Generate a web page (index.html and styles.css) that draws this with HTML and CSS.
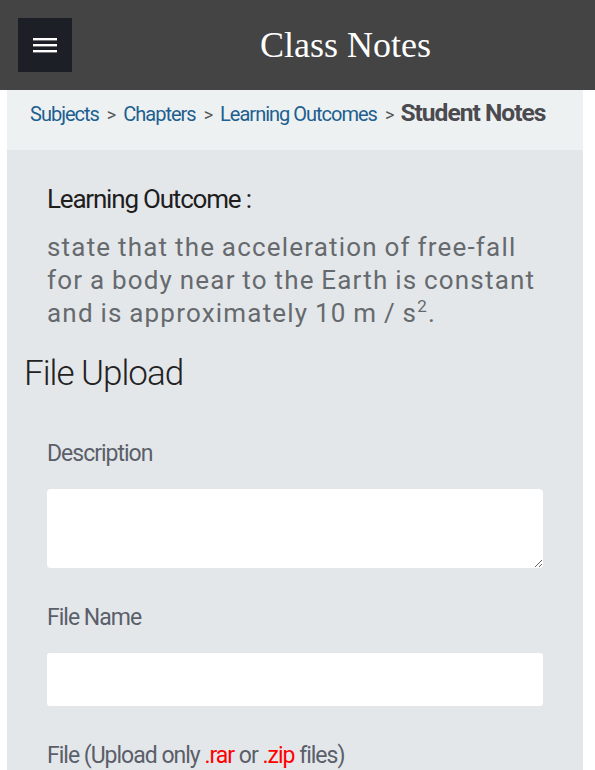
FILE: index.html
```html
<!DOCTYPE html>
<html>
<head>
<meta charset="utf-8">
<link rel="stylesheet" href="styles.css">
</head>
<body>
<header class="topbar">
  <button class="menu-btn" aria-label="Menu">
    <svg width="24" height="16" viewBox="0 0 24 16"><rect x="0" y="1" width="24" height="2.4" fill="#fff"/><rect x="0" y="7" width="24" height="2.4" fill="#fff"/><rect x="0" y="13" width="24" height="2.4" fill="#fff"/></svg>
  </button>
  <h1 class="title">Class Notes</h1>
</header>
<main class="panel">
  <nav class="crumbs">
    <a class="crumb">Subjects</a><span class="sep">&gt;</span>
    <a class="crumb">Chapters</a><span class="sep">&gt;</span>
    <a class="crumb">Learning Outcomes</a><span class="sep">&gt;</span>
    <span class="crumb-current">Student Notes</span>
  </nav>
  <section class="content">
    <div class="outcome">
      <div class="outcome-label">Learning Outcome :</div>
      <p class="outcome-text">state that the acceleration of free-fall for a body near to the Earth is constant and is approximately 10 m / s<sup>2</sup>.</p>
    </div>
    <h2 class="section-title">File Upload</h2>
    <form class="form">
      <label class="field-label">Description</label>
      <textarea class="field-area"></textarea>
      <label class="field-label">File Name</label>
      <input class="field-input" type="text">
      <label class="field-label">File (Upload only <span class="red">.rar</span> or <span class="red">.zip</span> files)</label>
    </form>
  </section>
</main>
</body>
</html>
```
FILE: styles.css
```css
html, body { margin: 0; padding: 0; background: #fff; }
body { font-family: Roboto, "Noto Sans", sans-serif; }
.topbar {
  height: 90px;
  background: #444444;
  display: flex;
  align-items: center;
  padding-left: 18px;
  box-sizing: border-box;
}
.menu-btn {
  width: 54px; height: 54px;
  background: #1c1f26;
  border: none; padding: 0;
  display: flex; align-items: center; justify-content: center;
}
.title {
  margin: 0;
  flex: 1;
  text-align: center;
  font-family: "Liberation Serif", "Times New Roman", serif;
  font-weight: normal;
  font-size: 36px;
  color: #fff;
  padding-left: 24px;
}
.panel {
  margin: 0 12px 0 7px;
  background: #e4e7ea;
}
.crumbs {
  height: 60px;
  background: #eef1f2;
  box-sizing: border-box;
  padding: 8px 0 0 23px;
  display: flex; align-items: baseline;
  font-size: 20px;
  letter-spacing: -1px;
}
.crumb { color: #1d5f8f; }
.sep { color: #555; font-size: 18px; margin: 0 8px 0 8px; }
.crumb-current { color: #4a4a4f; font-weight: bold; font-size: 24.6px; margin-left: -1px; }
.content { padding: 34px 0 0 0; }
.outcome { padding: 0 30px 0 40px; }
.outcome-label { font-size: 26px; letter-spacing: -1.2px; color: #1e1e1e; line-height: 30px; }
.outcome-text {
  margin: 17px 0 0;
  font-size: 26px; line-height: 33px; letter-spacing: 1.2px; word-spacing: -1px;
  color: #666a6e;
}
.outcome-text sup { font-size: 17px; line-height: 0; }
.section-title {
  margin: 23px 0 0 17px;
  font-weight: 300; font-size: 35px; letter-spacing: -1px; color: #222;
}
.form { padding: 45px 40px 0; display: flex; flex-direction: column; }
.field-label { font-size: 23px; letter-spacing: -1px; color: #5a5f6a; line-height: 30px; }
.field-area {
  margin: 20px 0 35px;
  height: 79px; box-sizing: border-box;
  border: none; border-radius: 4px; background: #fff;
}
.field-input {
  margin: 20px 0 35px;
  height: 53px; box-sizing: border-box;
  border: none; border-radius: 3px; background: #fff;
}
.red { color: #ff0000; }
```
